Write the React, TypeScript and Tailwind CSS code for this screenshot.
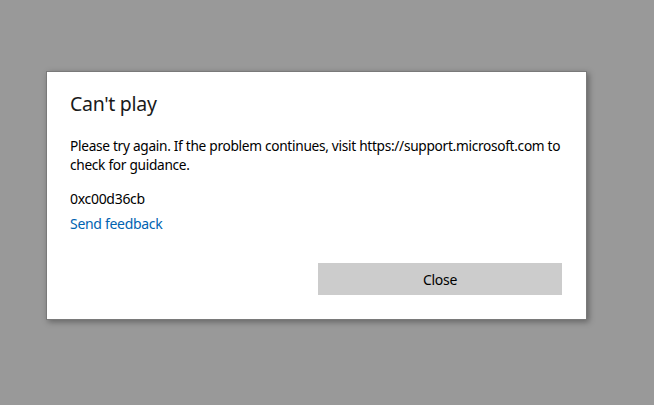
export default function App() {
  return (
    <div className="w-[654px] h-[405px] bg-[#999999] pt-[71px] pl-[46px] overflow-hidden" style={{ fontFamily: '"Noto Sans", "Open Sans", sans-serif' }}>
      <div className="w-[541px] h-[249px] bg-white border border-[#7a7a7a] shadow-[2px_2px_6px_rgba(0,0,0,0.35)] flex flex-col pl-[23px] pr-[24px]">
        <div className="pt-[18px] text-[19.5px] leading-[28px] text-[#1a1a1a] tracking-[-0.3px]">Can't play</div>
        <div className="mt-[18px] mr-[-6px] text-[13.7px] leading-[19px] text-black tracking-[-0.3px]">
          Please try again. If the problem continues, visit https://support.microsoft.com to check for guidance.
        </div>
        <div className="mt-[15px] text-[14px] leading-[19px] text-black tracking-[-0.3px]">0xc00d36cb</div>
        <div className="mt-[6px] text-[14px] leading-[19px] text-[#0063b1] tracking-[-0.3px]">Send feedback</div>
        <div className="flex-1" />
        <div className="flex justify-end pb-[24px]">
          <div className="w-[244px] h-[32px] bg-[#cccccc] flex items-center justify-center text-[14px] text-black tracking-[-0.3px]">Close</div>
        </div>
      </div>
    </div>
  );
}
